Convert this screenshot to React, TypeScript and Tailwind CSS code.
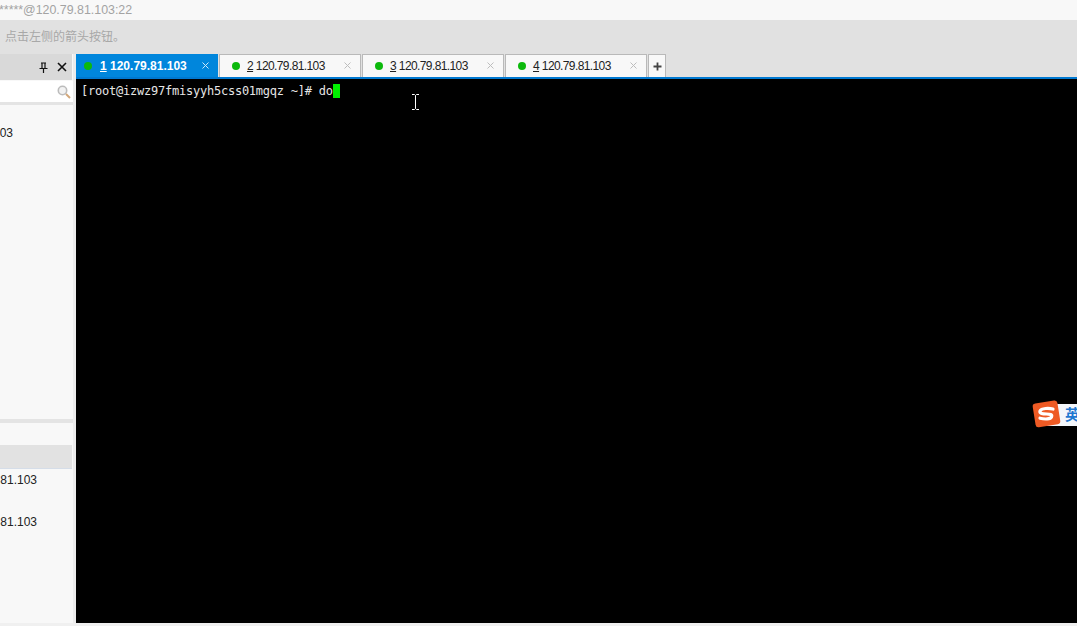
const tabs = ["2", "3", "4"];

function CloseMark({ color }: { color: string }) {
  return (
    <svg width="7" height="7" viewBox="0 0 7 7" fill="none" stroke={color} strokeWidth="1" className="ml-auto mr-[9px] mb-[1px]">
      <path d="M0.5 0.5l6 6M6.5 0.5l-6 6" />
    </svg>
  );
}

function Tab({ n }: { n: string }) {
  return (
    <div className="w-[142px] h-[23px] flex items-center bg-[#f8f8f8] border border-b-0 border-[#b9b9b9] text-[12px] tracking-[-0.6px] text-[#222] shrink-0">
      <span className="ml-[12px] w-[8px] h-[8px] rounded-full bg-[#0cb90c]" />
      <span className="ml-[7px] whitespace-nowrap">
        <span className="underline">{n}</span> 120.79.81.103
      </span>
      <CloseMark color="#bdbdbd" />
    </div>
  );
}

function SogouBadge() {
  return (
    <div className="absolute left-[1032px] top-[400px] flex items-center">
      <div className="absolute left-[12px] top-[4px] w-[40px] h-[22px] bg-[#f4f7fb]" />
      <svg width="29" height="28" viewBox="0 0 29 28" className="relative">
        <rect x="2" y="2" width="25" height="24" rx="3" fill="#ee5a24" transform="rotate(-9 14 14)" />
        <path d="M21 9 C17 8 9.5 8 8 11 C7 13.5 11 14 14.5 14 C18 14 20.5 14.5 19.5 17 C18.5 19.2 13 19.5 8 18.2" fill="none" stroke="#fff" strokeWidth="3.2" strokeLinecap="round" />
      </svg>
      <span className="relative ml-[4px] text-[15px] font-bold leading-none text-[#1f78d1]">英</span>
    </div>
  );
}

export default function App() {
  return (
    <div className="relative w-[1077px] h-[626px] overflow-hidden bg-[#f0f0f0] font-['Liberation_Sans','Noto_Sans_CJK_SC',sans-serif]">
      <div className="h-[20px] bg-[#f8f8f8] flex items-center overflow-hidden text-[12.4px] text-[#a3a3a3] whitespace-nowrap">
        <span className="ml-[-1px]">*****@120.79.81.103:22</span>
      </div>
      <div className="h-[34px] bg-[#e1e1e1] flex items-center pl-[5px] text-[12px] text-[#a8a8a8]">
        点击左侧的箭头按钮。
      </div>

      <div className="flex h-[569px]">
        <aside className="w-[73px] shrink-0 flex flex-col bg-[#f8f8f8] text-[12px] text-[#222]">
          <div className="h-[26px] w-[72px] bg-[#d9d9d9] flex items-center justify-end gap-[9px] pr-[5px]">
            <svg width="9" height="11" viewBox="0 0 9 11" fill="none" stroke="#111" strokeWidth="1.2">
              <path d="M2 1h5M3 1v5M6 1v5M0.5 6.5h8M4.5 6.5v4.5" />
            </svg>
            <svg width="10" height="10" viewBox="0 0 10 10" fill="none" stroke="#111" strokeWidth="1.6">
              <path d="M1 1l8 8M9 1l-8 8" />
            </svg>
          </div>
          <div className="h-[21px] mt-[1px] bg-white flex items-center justify-end pr-[2px] border-b-[3px] border-[#e4e4e4] box-content">
            <svg width="14" height="14" viewBox="0 0 14 14" fill="none">
              <circle cx="5.5" cy="5.5" r="4.2" stroke="#bcbcbc" strokeWidth="1.6" fill="#f2f2f2" />
              <path d="M9 9l4 4" stroke="#d2a679" strokeWidth="2" />
            </svg>
          </div>
          <div className="h-[314px] pt-[21px]">
            <div className="w-[13px] overflow-hidden flex justify-end leading-[14px]">
              <span className="whitespace-nowrap">120.79.81.103</span>
            </div>
          </div>
          <div className="h-[4px] bg-[#e4e4e4]" />
          <div className="h-[22px]" />
          <div className="h-[24px] w-[72px] bg-[#e2e2e2] border-b border-[#d5dde8]" />
          <div className="h-[42px] pt-[4px] leading-[14px]">
            <div className="w-[37px] overflow-hidden flex justify-end">
              <span className="whitespace-nowrap">120.79.81.103</span>
            </div>
          </div>
          <div className="h-[42px] pt-[4px] leading-[14px]">
            <div className="w-[37px] overflow-hidden flex justify-end">
              <span className="whitespace-nowrap">120.79.81.103</span>
            </div>
          </div>
        </aside>

        <div className="w-[3px] shrink-0 bg-[#ececec]" />

        <main className="flex-1 flex flex-col min-w-0">
          <div className="h-[25px] bg-[#e1e1e1] flex items-start shrink-0 gap-[1px] overflow-hidden">
            <div className="w-[142px] h-[23px] bg-[#0086dc] flex items-center text-[12px] font-bold text-white shrink-0">
              <span className="ml-[8px] w-[8px] h-[8px] rounded-full bg-[#0cb90c]" />
              <span className="ml-[8px] whitespace-nowrap">
                <span className="underline">1</span> 120.79.81.103
              </span>
              <CloseMark color="#cfe8f8" />
            </div>
            {tabs.map((n) => (
              <Tab key={n} n={n} />
            ))}
            <div className="w-[18px] h-[23px] bg-[#f8f8f8] border border-b-0 border-[#b9b9b9] flex items-center justify-center shrink-0">
              <svg width="9" height="9" viewBox="0 0 9 9" stroke="#444" strokeWidth="1.8">
                <path d="M4.5 0.5v8M0.5 4.5h8" />
              </svg>
            </div>
          </div>
          <div className="h-[2px] bg-[#0078d0] mt-[-2px] shrink-0 relative" />
          <div className="flex-1 bg-black pl-[5px] pt-[5px] font-['DejaVu_Sans_Mono',monospace] text-[12px] leading-[14px] tracking-[-0.23px] text-[#e6e6e6] whitespace-nowrap flex items-start">
            <span>[root@izwz97fmisyyh5css01mgqz ~]# do</span>
            <span className="w-[7px] h-[14px] bg-[#00f000] inline-block" />
          </div>
        </main>
      </div>

      {/* text cursor over the terminal */}
      <svg className="absolute left-[412px] top-[94px]" width="7" height="16" viewBox="0 0 7 16" fill="none" stroke="#fff" strokeWidth="1">
        <path d="M0 0.5h2.5l1 1 1-1h2.5M3.5 1.5v13M0 15.5h2.5l1-1 1 1h2.5" />
      </svg>
      <SogouBadge />
    </div>
  );
}
